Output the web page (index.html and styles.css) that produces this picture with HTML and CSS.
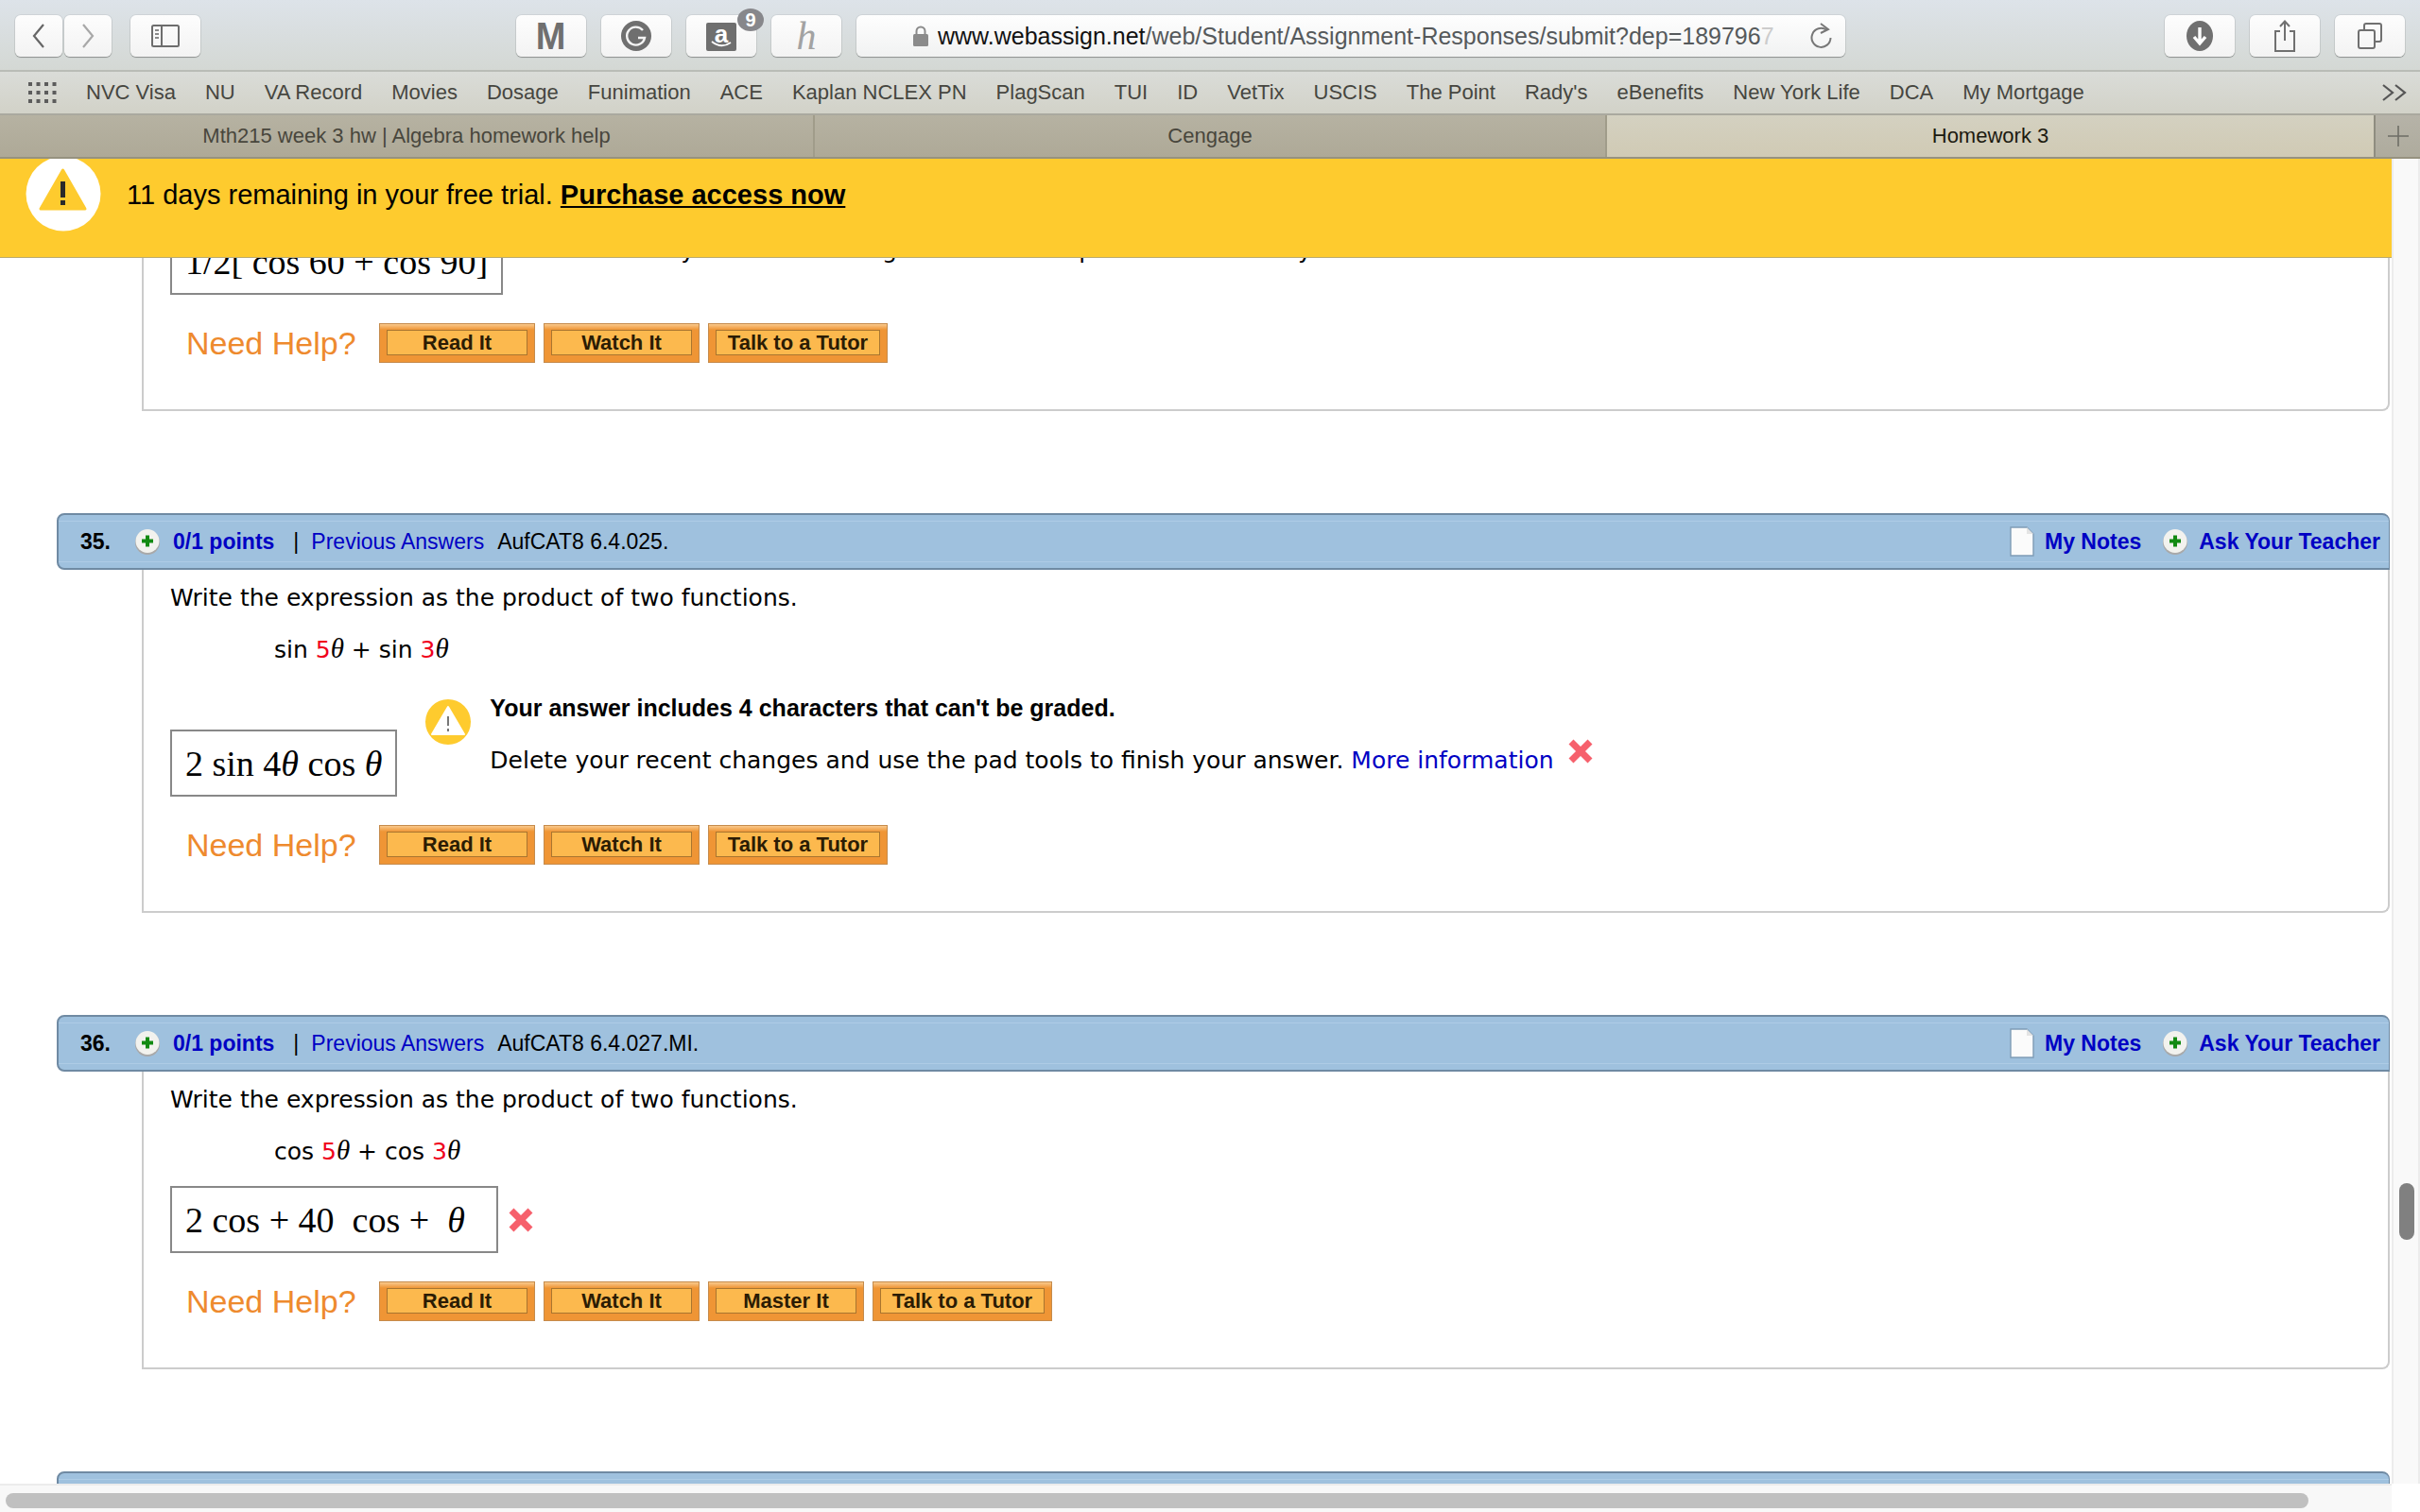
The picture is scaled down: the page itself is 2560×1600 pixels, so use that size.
FILE: index.html
```html
<!DOCTYPE html>
<html lang="en">
<head>
  <meta charset="UTF-8" />
  <title>Homework 3</title>
  <link rel="stylesheet" href="styles.css">
</head>
<body>
  <!-- Browser toolbar -->
  <div class="toolbar">
    <div class="tool-btn nav-btn">
      <svg width="14" height="28" viewBox="0 0 14 28"><path d="M12 2 L2 14 L12 26" fill="none" stroke="#666" stroke-width="2.2"/></svg>
    </div>
    <div class="tool-btn nav-btn nav-next">
      <svg width="14" height="28" viewBox="0 0 14 28"><path d="M2 2 L12 14 L2 26" fill="none" stroke="#a8a8a8" stroke-width="2.2"/></svg>
    </div>
    <div class="tool-btn wide-btn sidebar-btn">
      <svg width="30" height="24" viewBox="0 0 30 24"><rect x="1" y="1" width="28" height="22" rx="1.5" fill="none" stroke="#6d6d6d" stroke-width="2"/><path d="M11 1 V23" stroke="#6d6d6d" stroke-width="2"/><path d="M4 6 H8 M4 10 H8 M4 14 H8" stroke="#8a8a8a" stroke-width="2"/></svg>
    </div>

    <div class="ext-group">
      <div class="tool-btn wide-btn"><span class="ext-m">M</span></div>
      <div class="tool-btn wide-btn">
        <svg width="32" height="32" viewBox="0 0 32 32"><circle cx="16" cy="16" r="16" fill="#6f6f6f"/><path d="M23 10 A9.5 9.5 0 1 0 25 18 H18" fill="none" stroke="#f4f4f4" stroke-width="2.4"/><path d="M23 19 L20 23 L17 19" fill="none" stroke="#6f6f6f" stroke-width="0"/></svg>
      </div>
      <div class="tool-btn wide-btn ext-amazon">
        <div class="amazon-tile"><span class="amazon-a">a</span>
          <svg width="22" height="8" viewBox="0 0 22 8"><path d="M1 1 Q11 9 21 2" fill="none" stroke="#fff" stroke-width="1.8"/></svg>
        </div>
        <span class="badge">9</span>
      </div>
      <div class="tool-btn wide-btn"><span class="ext-h">h</span></div>
    </div>

    <div class="url-bar">
      <svg class="lock" width="16" height="22" viewBox="0 0 16 22"><rect x="0" y="9" width="16" height="13" rx="1.5" fill="#8b8b8b"/><path d="M3.5 9 V6 A4.5 4.5 0 0 1 12.5 6 V9" fill="none" stroke="#8b8b8b" stroke-width="2"/></svg>
      <span class="url-text"><span class="url-host">www.webassign.net</span>/web/Student/Assignment-Responses/submit?dep=189796<span class="url-fade">7</span></span>
      <svg class="reload" width="24" height="28" viewBox="0 0 24 28"><path d="M17 7.5 A10 10 0 1 0 21.5 16" fill="none" stroke="#777" stroke-width="2"/><path d="M11 1 L19 7 L11 11" fill="none" stroke="#777" stroke-width="2"/></svg>
    </div>

    <div class="right-group">
      <div class="tool-btn right-btn">
        <svg width="28" height="32" viewBox="0 0 28 32"><ellipse cx="14" cy="16" rx="14" ry="16" fill="#707070"/><path d="M14 7 V23 M8 17 L14 24 L20 17" fill="none" stroke="#fff" stroke-width="3.4"/></svg>
      </div>
      <div class="tool-btn right-btn">
        <svg width="24" height="34" viewBox="0 0 24 34"><path d="M7 12 H2 V33 H22 V12 H17" fill="none" stroke="#707070" stroke-width="2"/><path d="M12 22 V2 M7 7 L12 1.5 L17 7" fill="none" stroke="#707070" stroke-width="2"/></svg>
      </div>
      <div class="tool-btn right-btn">
        <svg width="26" height="28" viewBox="0 0 26 28"><rect x="1" y="8" width="17" height="19" rx="2" fill="none" stroke="#707070" stroke-width="2"/><path d="M7 8 V3 A2 2 0 0 1 9 1 H23 A2 2 0 0 1 25 3 V18 A2 2 0 0 1 23 20 H18" fill="none" stroke="#707070" stroke-width="2"/></svg>
      </div>
    </div>
  </div>

  <!-- Bookmarks -->
  <div class="bookmarks">
    <svg class="grid-icon" width="30" height="22" viewBox="0 0 30 22" fill="#5c5c5c">
      <rect x="0" y="0" width="4" height="4"/><rect x="8.5" y="0" width="4" height="4"/><rect x="17" y="0" width="4" height="4"/><rect x="25.5" y="0" width="4" height="4"/>
      <rect x="0" y="9" width="4" height="4"/><rect x="8.5" y="9" width="4" height="4"/><rect x="17" y="9" width="4" height="4"/><rect x="25.5" y="9" width="4" height="4"/>
      <rect x="0" y="18" width="4" height="4"/><rect x="8.5" y="18" width="4" height="4"/><rect x="17" y="18" width="4" height="4"/><rect x="25.5" y="18" width="4" height="4"/>
    </svg>
    <span>NVC Visa</span><span>NU</span><span>VA Record</span><span>Movies</span><span>Dosage</span><span>Funimation</span><span>ACE</span><span>Kaplan NCLEX PN</span><span>PlagScan</span><span>TUI</span><span>ID</span><span>VetTix</span><span>USCIS</span><span>The Point</span><span>Rady's</span><span>eBenefits</span><span>New York Life</span><span>DCA</span><span>My Mortgage</span>
    <svg class="more-icon" width="26" height="18" viewBox="0 0 26 18"><path d="M1 1 L11 9 L1 17 M14 1 L24 9 L14 17" fill="none" stroke="#555" stroke-width="2.2"/></svg>
  </div>

  <!-- Tabs -->
  <div class="tabs">
    <div class="tab tab-one">Mth215 week 3 hw | Algebra homework help</div>
    <div class="tab tab-two">Cengage</div>
    <div class="tab tab-active">Homework 3</div>
    <div class="tab-add">
      <svg width="22" height="22" viewBox="0 0 22 22"><path d="M11 0 V22 M0 11 H22" stroke="#6e6e66" stroke-width="1.6"/></svg>
    </div>
  </div>

  <div class="viewport">
    <div class="page">

      <!-- Question 34, scrolled mostly out of view -->
      <div class="panel panel-tail">
        <div class="answer-row">
          <div class="answer-box answer-box-low">1/2[ cos 60 + cos 90]</div>
          <div class="grade-note">
            <svg class="note-icon" width="48" height="48" viewBox="0 0 48 48"><circle cx="24" cy="24" r="24" fill="#fecb2e"/><path d="M24 8 L41 37 H7 Z" fill="#fff" stroke="#fff" stroke-width="2" stroke-linejoin="round"/><path d="M24 18 V28 M24 31 V34" stroke="#777" stroke-width="2"/></svg>
            <div>
              <p class="note-title">Your answer includes 4 characters that can't be graded.</p>
              <p class="note-text">Delete your recent changes and use the pad tools to finish your answer. <a class="link">More information</a></p>
            </div>
          </div>
        </div>
        <div class="help-row">
          <span class="need-help">Need Help?</span>
          <span class="help-btn"><span>Read It</span></span>
          <span class="help-btn"><span>Watch It</span></span>
          <span class="help-btn help-btn-wide"><span>Talk to a Tutor</span></span>
        </div>
      </div>

      <!-- Question 35 -->
      <div class="question">
        <div class="q-head">
          <span class="q-num">35.</span>
          <svg class="plus-icon" width="26" height="28" viewBox="0 0 26 28"><circle cx="13" cy="15" r="13" fill="#a9a9a9"/><circle cx="13" cy="13.5" r="12.5" fill="#f2f2ee"/><path d="M13 7.5 V19.5 M7 13.5 H19" stroke="#128a12" stroke-width="4"/></svg>
          <span class="q-points">0/1 points</span>
          <span class="q-sep">|</span>
          <a class="q-prev">Previous Answers</a>
          <span class="q-code">AufCAT8 6.4.025.</span>
          <span class="q-actions">
            <svg class="doc-icon" width="26" height="32" viewBox="0 0 26 32"><path d="M1 1 H18 L25 8 V31 H1 Z" fill="#fbfbfb" stroke="#7f9cb6" stroke-width="1.4"/><path d="M18 1 V8 H25 Z" fill="#e4e4e4"/></svg>
            <a class="q-action-link">My Notes</a>
            <svg class="plus-icon plus-right" width="26" height="28" viewBox="0 0 26 28"><circle cx="13" cy="15" r="13" fill="#a9a9a9"/><circle cx="13" cy="13.5" r="12.5" fill="#f2f2ee"/><path d="M13 7.5 V19.5 M7 13.5 H19" stroke="#128a12" stroke-width="4"/></svg>
            <a class="q-action-link">Ask Your Teacher</a>
          </span>
        </div>
        <div class="panel">
          <p class="prompt">Write the expression as the product of two functions.</p>
          <p class="expr">sin <span class="red">5</span><i class="theta">&theta;</i> + sin <span class="red">3</span><i class="theta">&theta;</i></p>
          <div class="answer-row">
            <div class="answer-box answer-box-low">2 sin 4<i>&theta;</i> cos <i>&theta;</i></div>
            <div class="grade-note">
              <svg class="note-icon" width="48" height="48" viewBox="0 0 48 48"><circle cx="24" cy="24" r="24" fill="#fecb2e"/><path d="M24 8 L41 37 H7 Z" fill="#fff" stroke="#fff" stroke-width="2" stroke-linejoin="round"/><path d="M24 18 V28 M24 31 V34" stroke="#777" stroke-width="2"/></svg>
              <div>
                <p class="note-title">Your answer includes 4 characters that can't be graded.</p>
                <p class="note-text">Delete your recent changes and use the pad tools to finish your answer. <a class="link">More information</a>
                  <svg class="wrong-icon wrong-raised" width="28" height="28" viewBox="0 0 28 28"><path d="M4 4 L24 24 M24 4 L4 24" stroke="#f6606c" stroke-width="7"/></svg>
                </p>
              </div>
            </div>
          </div>
          <div class="help-row">
            <span class="need-help">Need Help?</span>
            <span class="help-btn"><span>Read It</span></span>
            <span class="help-btn"><span>Watch It</span></span>
            <span class="help-btn help-btn-wide"><span>Talk to a Tutor</span></span>
          </div>
        </div>
      </div>

      <!-- Question 36 -->
      <div class="question">
        <div class="q-head">
          <span class="q-num">36.</span>
          <svg class="plus-icon" width="26" height="28" viewBox="0 0 26 28"><circle cx="13" cy="15" r="13" fill="#a9a9a9"/><circle cx="13" cy="13.5" r="12.5" fill="#f2f2ee"/><path d="M13 7.5 V19.5 M7 13.5 H19" stroke="#128a12" stroke-width="4"/></svg>
          <span class="q-points">0/1 points</span>
          <span class="q-sep">|</span>
          <a class="q-prev">Previous Answers</a>
          <span class="q-code">AufCAT8 6.4.027.MI.</span>
          <span class="q-actions">
            <svg class="doc-icon" width="26" height="32" viewBox="0 0 26 32"><path d="M1 1 H18 L25 8 V31 H1 Z" fill="#fbfbfb" stroke="#7f9cb6" stroke-width="1.4"/><path d="M18 1 V8 H25 Z" fill="#e4e4e4"/></svg>
            <a class="q-action-link">My Notes</a>
            <svg class="plus-icon plus-right" width="26" height="28" viewBox="0 0 26 28"><circle cx="13" cy="15" r="13" fill="#a9a9a9"/><circle cx="13" cy="13.5" r="12.5" fill="#f2f2ee"/><path d="M13 7.5 V19.5 M7 13.5 H19" stroke="#128a12" stroke-width="4"/></svg>
            <a class="q-action-link">Ask Your Teacher</a>
          </span>
        </div>
        <div class="panel">
          <p class="prompt">Write the expression as the product of two functions.</p>
          <p class="expr">cos <span class="red">5</span><i class="theta">&theta;</i> + cos <span class="red">3</span><i class="theta">&theta;</i></p>
          <div class="answer-row answer-row-center">
            <div class="answer-box answer-box-wide">2 cos + 40&nbsp; cos + &nbsp;<i>&theta;</i></div>
            <svg class="wrong-icon" width="28" height="28" viewBox="0 0 28 28"><path d="M4 4 L24 24 M24 4 L4 24" stroke="#f6606c" stroke-width="7"/></svg>
          </div>
          <div class="help-row">
            <span class="need-help">Need Help?</span>
            <span class="help-btn"><span>Read It</span></span>
            <span class="help-btn"><span>Watch It</span></span>
            <span class="help-btn"><span>Master It</span></span>
            <span class="help-btn help-btn-wide"><span>Talk to a Tutor</span></span>
          </div>
        </div>
      </div>

      <div class="question">
        <div class="q-head"></div>
      </div>
    </div>

    <!-- Trial banner stays on top of the page -->
    <div class="trial-banner">
      <svg class="trial-icon" width="80" height="80" viewBox="0 0 80 80"><circle cx="40" cy="40" r="39.5" fill="#fff"/><path d="M39.5 15 L63 56 H16 Z" fill="#fecb2e" stroke="#fecb2e" stroke-width="3" stroke-linejoin="round"/><path d="M39.5 27 V44" stroke="#2a2a2a" stroke-width="5"/><path d="M39.5 47 V52" stroke="#2a2a2a" stroke-width="5"/></svg>
      <span>11 days remaining in your free trial. <a class="trial-link">Purchase access now</a></span>
    </div>

    <div class="v-scroll"><div class="v-thumb"></div></div>
    <div class="h-scroll"><div class="h-thumb"></div></div>
    <div class="scroll-corner"></div>
  </div>
</body>
</html>
```

FILE: styles.css
```css
* {
  box-sizing: border-box;
}

html, body {
  margin: 0;
  padding: 0;
  height: 100%;
}

body {
  width: 2560px;
  height: 1600px;
  overflow: hidden;
  display: flex;
  flex-direction: column;
  background: #fff;
  font-family: 'Liberation Sans', Arial, sans-serif;
  color: #000;
}

p {
  margin: 0;
}

/* ---------- browser chrome ---------- */

.toolbar {
  height: 76px;
  flex: none;
  display: flex;
  align-items: flex-start;
  padding: 16px 16px 0;
  background: linear-gradient(#dde3e9, #d4d8d4);
  border-bottom: 2px solid #b9bcb6;
}

.tool-btn {
  height: 44px;
  display: flex;
  align-items: center;
  justify-content: center;
  background: linear-gradient(#fdfdfd, #f3f3f3);
  border-radius: 6px;
  box-shadow: 0 1px 1px rgba(0, 0, 0, 0.3), 0 0 0 1px rgba(0, 0, 0, 0.06);
}

.nav-btn {
  width: 50px;
}

.nav-next {
  margin-left: 2px;
}

.wide-btn {
  width: 74px;
}

.sidebar-btn {
  margin-left: 20px;
}

.ext-group {
  display: flex;
  gap: 16px;
  margin-left: 334px;
}

.ext-m {
  font-family: 'Liberation Sans', sans-serif;
  font-weight: bold;
  font-size: 40px;
  line-height: 1;
  color: #6f6f6f;
  transform: scaleX(0.95);
}

.ext-amazon {
  position: relative;
}

.amazon-tile {
  width: 32px;
  height: 30px;
  margin-top: 2px;
  border-radius: 2px;
  background: #6f6f6f;
  color: #fff;
  display: flex;
  flex-direction: column;
  align-items: center;
}

.amazon-tile svg {
  margin-top: -5px;
}

.amazon-a {
  font-size: 26px;
  line-height: 24px;
  font-weight: bold;
}

.badge {
  position: absolute;
  top: -7px;
  right: -8px;
  width: 28px;
  height: 24px;
  border-radius: 50%;
  background: #87878b;
  color: #fff;
  font-size: 20px;
  font-weight: bold;
  line-height: 24px;
  text-align: center;
}

.ext-h {
  font-family: 'Liberation Serif', serif;
  font-style: italic;
  font-size: 42px;
  line-height: 1;
  color: #a2a2a2;
}

.url-bar {
  width: 1046px;
  height: 44px;
  margin-left: 16px;
  display: flex;
  align-items: center;
  background: linear-gradient(#fefefe, #f1f2f2);
  border-radius: 6px;
  box-shadow: 0 1px 1px rgba(0, 0, 0, 0.3), 0 0 0 1px rgba(0, 0, 0, 0.06);
  font-size: 25px;
  color: #55595b;
}

.lock {
  margin-left: 60px;
}

.url-text {
  margin-left: 10px;
  white-space: nowrap;
}

.url-host {
  color: #111;
}

.url-fade {
  color: #ccc;
}

.reload {
  margin-left: auto;
  margin-right: 13px;
}

.right-group {
  display: flex;
  gap: 16px;
  margin-left: 338px;
}

.right-btn {
  width: 74px;
}

.bookmarks {
  height: 46px;
  flex: none;
  display: flex;
  align-items: center;
  gap: 31px;
  padding: 0 14px 0 30px;
  background: linear-gradient(#dadcd8, #d2d2c8);
  border-bottom: 2px solid #aaa99f;
  font-size: 22px;
  color: #464640;
  white-space: nowrap;
}

.grid-icon {
  flex: none;
}

.more-icon {
  margin-left: auto;
}

.tabs {
  height: 46px;
  flex: none;
  display: flex;
  border-bottom: 2px solid #96927f;
  font-size: 22px;
  color: #48463c;
}

.tab {
  display: flex;
  align-items: center;
  justify-content: center;
  background: linear-gradient(#b6b2a2, #aea997);
  border-right: 2px solid #a09c8a;
}

.tab-one {
  width: 862px;
}

.tab-two {
  width: 838px;
}

.tab-active {
  width: 813px;
  background: linear-gradient(#d4d1c1, #d0cab4);
  color: #1c1a10;
  border-right: 2px solid #8f8d80;
}

.tab-add {
  flex: 1;
  display: flex;
  align-items: center;
  justify-content: center;
  background: linear-gradient(#b6b3a8, #aeab9d);
}

/* ---------- page area ---------- */

.viewport {
  position: relative;
  flex: 1;
  overflow: hidden;
}

.page {
  width: 2528px;
}

.question {
  margin: 108px 0 0 60px;
}

.q-head {
  height: 60px;
  display: flex;
  align-items: center;
  padding: 0 9px 0 23px;
  border: 2px solid #6f8aa3;
  border-right-width: 1px;
  border-radius: 8px 8px 0 8px;
  background:
    linear-gradient(#aecce6, #aecce6) 0 6px / 100% 1px no-repeat,
    linear-gradient(#aecce6, #aecce6) 0 calc(100% - 6px) / 100% 1px no-repeat,
    #9fc1de;
  font-size: 23px;
  white-space: nowrap;
}

.q-num {
  width: 58px;
  font-weight: bold;
}

.plus-icon {
  flex: none;
}

.q-points {
  margin-left: 14px;
  font-weight: bold;
  color: #0000c4;
}

.q-sep {
  margin-left: 20px;
}

.q-prev {
  margin-left: 13px;
  color: #0000c4;
}

.q-code {
  margin-left: 14px;
}

.q-actions {
  margin-left: auto;
  display: flex;
  align-items: center;
  font-weight: bold;
}

.q-action-link {
  margin-left: 11px;
  color: #0000c4;
}

.plus-right {
  margin-left: 23px;
}

.plus-right + .q-action-link {
  margin-left: 12px;
}

.panel {
  margin-left: 90px;
  padding: 13px 28px 49px 28px;
  border: 2px solid #ccc;
  border-top: none;
  border-radius: 0 0 8px 0;
}

.question .panel {
  margin-left: 90px;
}

.panel-tail {
  margin-left: 150px;
  padding-top: 4px;
}

.prompt {
  height: 34px;
  line-height: 34px;
  font-family: 'DejaVu Sans', sans-serif;
  font-size: 25px;
}

.expr {
  height: 34px;
  margin: 19px 0 0 110px;
  line-height: 34px;
  font-family: 'DejaVu Sans', sans-serif;
  font-size: 25px;
}

.red {
  color: #f0001c;
}

.theta {
  font-family: 'Liberation Serif', serif;
  font-size: 29px;
}

.answer-row {
  display: flex;
  align-items: flex-start;
  margin-top: 21px;
}

.answer-row-center {
  align-items: center;
  gap: 10px;
}

.answer-box {
  flex: none;
  height: 71px;
  display: flex;
  align-items: center;
  padding: 0 14px;
  border: 2px solid #888;
  background: #fff;
  font-family: 'Liberation Serif', serif;
  font-size: 38px;
  white-space: pre;
}

.answer-box-low {
  margin-top: 48px;
}

.answer-box-wide {
  width: 347px;
}

.grade-note {
  display: flex;
  gap: 20px;
  margin-left: 30px;
  padding-top: 16px;
}

.note-icon {
  flex: none;
}

.note-title {
  margin-top: -6px;
  height: 30px;
  line-height: 30px;
  font-size: 25px;
  font-weight: bold;
}

.note-text {
  position: relative;
  margin-top: 17px;
  height: 30px;
  line-height: 30px;
  font-family: 'DejaVu Sans', sans-serif;
  font-size: 25px;
  white-space: nowrap;
}

.link {
  color: #0000c4;
}

.wrong-icon {
  flex: none;
}

.wrong-raised {
  margin-left: 6px;
  vertical-align: 4px;
}

.help-row {
  display: flex;
  align-items: center;
  margin-top: 30px;
  height: 42px;
  padding-left: 17px;
}

.need-help {
  width: 204px;
  font-size: 34px;
  color: #ee8a2e;
  white-space: nowrap;
}

.help-btn {
  width: 165px;
  height: 42px;
  margin-right: 9px;
  padding: 6px 7px 7px 7px;
  background: linear-gradient(#f9c98c 0, #ef9535 6px, #ef9535 100%);
  border: 1px solid #c58b4c;
  font-size: 22px;
  font-weight: bold;
  color: #2b1c04;
}

.help-btn span {
  display: flex;
  height: 100%;
  align-items: center;
  justify-content: center;
  background: #fcb94e;
  border: 1px solid #a9752f;
  white-space: nowrap;
}

.help-btn-wide {
  width: 190px;
}

/* ---------- overlays ---------- */

.trial-banner {
  position: absolute;
  top: 0;
  left: 0;
  width: 2530px;
  height: 105px;
  display: flex;
  align-items: flex-start;
  padding: 21px 0 0 134px;
  overflow: hidden;
  background: #fecb2e;
  border-bottom: 1px solid #b9ab74;
  font-size: 29px;
  line-height: 34px;
}

.trial-icon {
  position: absolute;
  top: -3px;
  left: 27px;
}

.trial-link {
  font-weight: bold;
  text-decoration: underline;
}

.v-scroll {
  position: absolute;
  top: 0;
  right: 0;
  bottom: 0;
  width: 30px;
  background: #f9f9f9;
  border-left: 2px solid #ececec;
  border-right: 2px solid #ececec;
}

.v-thumb {
  width: 16px;
  height: 60px;
  margin: 1084px 0 0 6px;
  border-radius: 8px;
  background: #808080;
}

.h-scroll {
  position: absolute;
  left: 0;
  bottom: 0;
  width: 2530px;
  height: 30px;
  padding: 8px 6px;
  background: #f8f8f8;
  border-top: 2px solid #ececec;
}

.h-thumb {
  width: 2436px;
  height: 16px;
  border-radius: 8px;
  background: #c0c0c0;
}

.scroll-corner {
  position: absolute;
  right: 0;
  bottom: 0;
  width: 30px;
  height: 30px;
  background: #fff;
}
```
